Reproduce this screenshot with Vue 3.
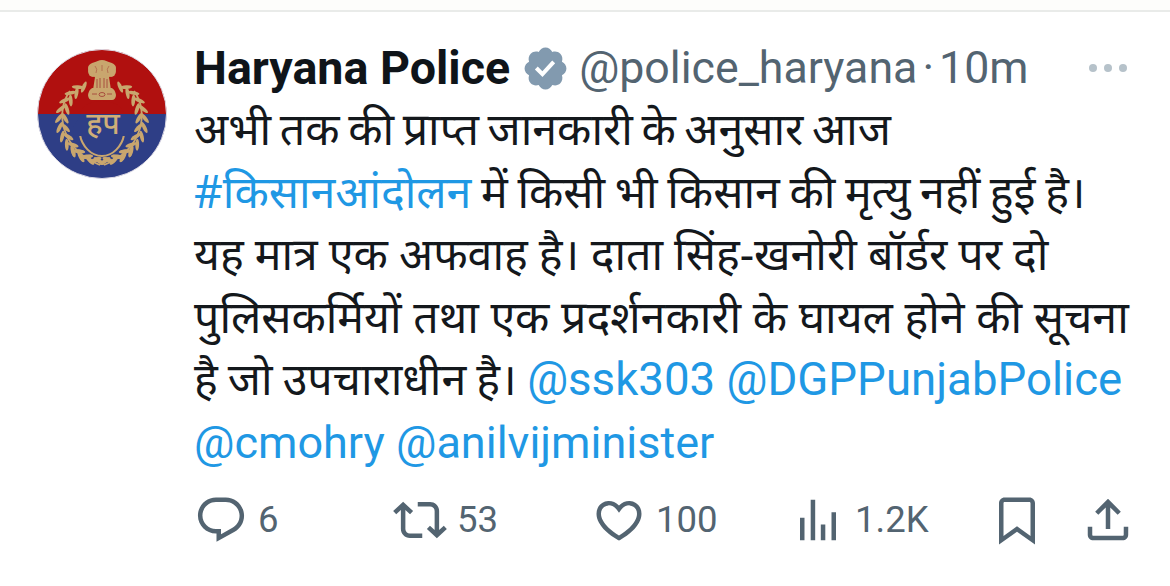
<template>
  <div class="page">
    <div class="topbar"></div>
    <article class="tweet">
      <svg class="avatar" viewBox="0 0 130 130">
        <defs>
          <clipPath id="disc"><circle cx="65" cy="65" r="64.5" /></clipPath>
        </defs>
        <g clip-path="url(#disc)">
          <rect width="130" height="65" fill="#b0100f" />
          <rect y="65" width="130" height="65" fill="#2e3e86" />
        </g>
        <circle cx="65" cy="65" r="64.5" fill="none" stroke="#dcd9e4" stroke-width="1" />

        <!-- wreath -->
        <g fill="#c9a66e">
          <ellipse
            v-for="(leaf, i) in leaves"
            :key="i"
            rx="6"
            ry="1.9"
            :transform="`translate(${leaf.x} ${leaf.y}) rotate(${leaf.r})`"
          />
        </g>
        <path d="M33 42C18 62 23 100 63 116M97 42c15 20 10 58-30 74" fill="none" stroke="#c9a66e" stroke-width="1.8" />

        <!-- cap and band -->
        <path d="M43 65c2-8 10-13 22-13s20 5 22 13z" fill="#b0100f" />
        <path d="M43 86c2 11 11 21 22 21s20-10 22-21z" fill="#2e3e86" stroke="#c9a66e" stroke-width="2" />
        <path d="M40 72l4-7h52v18l-4 4H36v-9z" fill="#2e3e86" />
        <text class="emblem" x="66" y="85" text-anchor="middle">हप</text>

        <!-- lion capital -->
        <g fill="#c9a66e">
          <ellipse cx="65" cy="19" rx="14" ry="7" />
          <ellipse cx="56" cy="22" rx="5" ry="6" />
          <ellipse cx="74" cy="22" rx="5" ry="6" />
          <ellipse cx="65" cy="24" rx="9" ry="7" />
          <ellipse cx="65" cy="14" rx="6" ry="3" />
          <path d="M58 28h14l2 13H56z" />
          <path d="M56 39h18c2 0 4 2 5 7 0 3-2 5-4 5H55c-2 0-4-2-4-5 1-5 3-7 5-7z" />
        </g>
        <g fill="none" stroke="#a5453a" stroke-width="0.9">
          <path d="M60 30v9M63 29v10M67 29v10M70 30v9" />
          <path d="M55 45h5M70 45h5" />
          <ellipse cx="65" cy="45.5" rx="3" ry="2" />
          <path d="M58 17q3 3 1 7M72 17q-3 3-1 7M65 16v6" opacity="0.6" />
        </g>
      </svg>
      <div class="body">
        <header class="head">
          <span class="name">Haryana Police</span>
          <svg class="badge" viewBox="0 0 24 24"><path :d="icons.verified" /></svg>
          <span class="handle">@police_haryana</span>
          <span class="dot">·</span>
          <span class="time">10m</span>
          <span class="more"><i></i><i></i><i></i></span>
        </header>
        <div class="text">
          <div class="tight-3">अभी तक की प्राप्त जानकारी के अनुसार आज</div>
          <div class="tight-2"><span class="link">#किसानआंदोलन</span> में किसी भी किसान की मृत्यु नहीं हुई है।</div>
          <div class="tight-half">यह मात्र एक अफवाह है। दाता सिंह-खनोरी बॉर्डर पर दो</div>
          <div>पुलिसकर्मियों तथा एक प्रदर्शनकारी के घायल होने की सूचना</div>
          <div class="tight-1">है जो उपचाराधीन है। <span class="link latin wide">@ssk303 @DGPPunjabPolice</span></div>
          <div><span class="link latin">@cmohry @anilvijminister</span></div>
        </div>
        <footer class="actions">
          <div v-for="a in actions" :key="a.icon" class="action">
            <svg viewBox="0 0 24 24"><path :d="icons[a.icon]" /></svg>
            <span v-if="a.count">{{ a.count }}</span>
          </div>
        </footer>
      </div>
    </article>
  </div>
</template>

<script setup>
const icons = {
  verified: 'M22.25 12c0-1.43-.88-2.67-2.19-3.34.46-1.39.2-2.9-.81-3.91s-2.52-1.27-3.91-.81c-.66-1.31-1.91-2.19-3.34-2.19s-2.67.88-3.33 2.19c-1.4-.46-2.91-.2-3.92.81s-1.26 2.52-.8 3.91c-1.31.67-2.2 1.91-2.2 3.34s.89 2.67 2.2 3.34c-.46 1.39-.21 2.9.8 3.91s2.52 1.26 3.91.81c.67 1.31 1.91 2.19 3.34 2.19s2.68-.88 3.34-2.19c1.39.45 2.9.2 3.91-.81s1.27-2.52.81-3.91c1.31-.67 2.19-1.91 2.19-3.34zm-11.71 4.2L6.8 12.46l1.41-1.42 2.26 2.26 4.8-5.23 1.47 1.36-6.2 6.77z',
  reply: 'M1.751 10c0-4.42 3.584-8 8.005-8h4.366c4.49 0 8.129 3.64 8.129 8.13 0 2.96-1.607 5.68-4.196 7.11l-8.054 4.46v-3.69h-.067c-4.49.1-8.183-3.51-8.183-8.01zm8.005-6c-3.317 0-6.005 2.69-6.005 6 0 3.37 2.77 6.08 6.138 6.01l.351-.01h1.761v2.3l5.087-2.81c1.951-1.08 3.163-3.13 3.163-5.36 0-3.39-2.744-6.13-6.129-6.13H9.756z',
  retweet: 'M4.5 3.88l4.432 4.14-1.364 1.46L5.5 7.55V16c0 1.1.896 2 2 2H13v2H7.5c-2.209 0-4-1.79-4-4V7.55L1.432 9.48.068 8.02 4.5 3.88zM16.5 6H11V4h5.5c2.209 0 4 1.79 4 4v8.45l2.068-1.93 1.364 1.46-4.432 4.14-4.432-4.14 1.364-1.46 2.068 1.93V8c0-1.1-.896-2-2-2z',
  like: 'M16.697 5.5c-1.222-.06-2.679.51-3.89 2.16l-.805 1.09-.806-1.09C9.984 6.01 8.526 5.44 7.304 5.5c-1.243.07-2.349.78-2.91 1.91-.552 1.12-.633 2.78.479 4.82 1.074 1.97 3.257 4.27 7.129 6.61 3.87-2.34 6.052-4.64 7.126-6.61 1.111-2.04 1.03-3.7.477-4.82-.561-1.13-1.666-1.84-2.908-1.91zm4.187 7.69c-1.351 2.48-4.001 5.12-8.379 7.67l-.503.3-.504-.3c-4.379-2.55-7.029-5.19-8.382-7.67-1.36-2.5-1.41-4.86-.514-6.67.887-1.79 2.647-2.91 4.601-3.01 1.651-.09 3.368.56 4.798 2.01 1.429-1.45 3.146-2.1 4.796-2.01 1.954.1 3.714 1.22 4.601 3.01.896 1.81.846 4.17-.514 6.67z',
  views: 'M8.75 21V3h2v18h-2zM18 21V8.5h2V21h-2zM4 21l.004-10h2L6 21H4zm9.248 0v-7h2v7h-2z',
  bookmark: 'M4 4.5C4 3.12 5.119 2 6.5 2h11C18.881 2 20 3.12 20 4.5v18.44l-8-5.71-8 5.71V4.5zM6.5 4c-.276 0-.5.22-.5.5v14.56l6-4.29 6 4.29V4.5c0-.28-.224-.5-.5-.5h-11z',
  share: 'M12 2.59l5.7 5.7-1.41 1.42L13 6.41V16h-2V6.41l-3.3 3.3-1.41-1.42L12 2.59zM21 15l-.02 3.51c0 1.38-1.12 2.49-2.5 2.49H5.5C4.11 21 3 19.88 3 18.5V15h2v3.5c0 .28.22.5.5.5h12.98c.28 0 .5-.22.5-.5L19 15h2z'
}

const actions = [
  { icon: 'reply', count: '6' },
  { icon: 'retweet', count: '53' },
  { icon: 'like', count: '100' },
  { icon: 'views', count: '1.2K' },
  { icon: 'bookmark', count: '' },
  { icon: 'share', count: '' }
]

// wheat leaves along both arcs of the wreath
const leaves = []
for (const side of [-1, 1]) {
  for (let i = 0; i < 15; i++) {
    const a = ((-58 + i * 13.5) * Math.PI) / 180
    const x = 65 + side * 40 * Math.cos(a)
    const y = 72 + 40 * Math.sin(a)
    const tangent = ((a * 180) / Math.PI + 90) * side
    const base = side < 0 ? 180 : 0
    leaves.push({ x: +(x + side * 3).toFixed(1), y: +y.toFixed(1), r: base + tangent - side * 35 })
    leaves.push({ x: +(x - side * 3).toFixed(1), y: +y.toFixed(1), r: base + tangent + side * 35 })
  }
}
</script>

<style>
html, body {
  background: #fff;
  overflow: hidden;
}
</style>

<style scoped>
.page {
  width: 1170px;
  height: 586px;
  overflow: hidden;
  background: #fff;
  font-family: Roboto, "Noto Sans", sans-serif;
}

.topbar {
  height: 10px;
  background: #fdfdfb;
  border-bottom: 2px solid #e9ebe9;
}

.tweet {
  display: flex;
  padding: 36px 0 0 37px;
}

.avatar {
  width: 130px;
  height: 130px;
  flex: none;
  margin-top: 1px;
  margin-right: 27px;
}

.emblem {
  font-family: "Noto Sans", sans-serif;
  font-size: 30px;
  font-weight: 500;
  fill: #cfae78;
}

.body {
  flex: 1;
  min-width: 0;
}

.head {
  display: flex;
  align-items: center;
  height: 40px;
  font-size: 44.7px;
  color: #536471;
  white-space: nowrap;
}

.name {
  font-size: 46.6px;
  font-weight: 700;
  color: #0f1419;
}

.badge {
  width: 49px;
  height: 49px;
  margin: 0 9px 0 11px;
  fill: #829aaf;
}

.dot {
  margin: 0 5px;
}

.more {
  display: flex;
  gap: 6.5px;
  margin-left: 60px;
}

.more i {
  width: 8.5px;
  height: 8.5px;
  border-radius: 50%;
  background: #b6c2ca;
}

.text {
  margin-top: 9px;
  font-family: "Noto Sans", "Noto Sans Devanagari", "Lohit Devanagari", Roboto, sans-serif;
  font-size: 44.7px;
  line-height: 62.6px;
  color: #14181c;
  white-space: nowrap;
}

.tight-half {
  word-spacing: -0.5px;
}

.tight-1 {
  word-spacing: -1.5px;
}

.tight-2 {
  word-spacing: -2px;
}

.tight-3 {
  word-spacing: -3px;
}

.link {
  color: #1f98e4;
}

.latin {
  font-family: Roboto, sans-serif;
  font-size: 45px;
  line-height: 0;
  word-spacing: 0;
}

.wide {
  font-size: 45.6px;
}

.actions {
  display: grid;
  grid-template-columns: repeat(4, 199px) 91px 54px;
  margin-top: 20px;
}

.action {
  display: flex;
  align-items: center;
  gap: 10px;
  font-size: 36.5px;
  color: #536471;
}

.action svg {
  width: 54px;
  height: 54px;
  flex: none;
  fill: #536471;
}
</style>
